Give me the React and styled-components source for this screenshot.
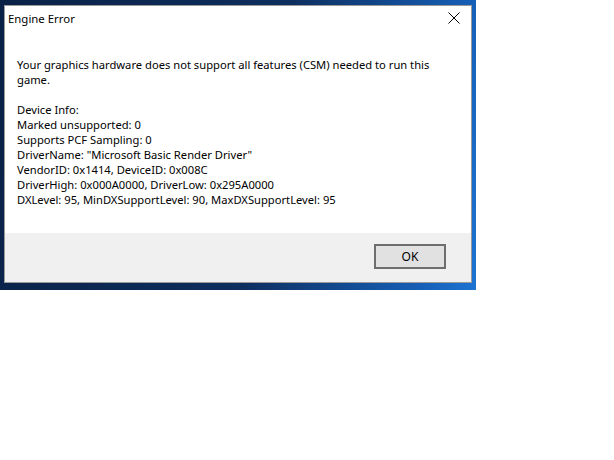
import React from "react";
import styled, { createGlobalStyle } from "styled-components";

const GlobalStyle = createGlobalStyle`
  html, body {
    margin: 0;
    padding: 0;
    background: #ffffff;
  }
  body {
    font-family: "Noto Sans", "Open Sans", sans-serif;
    font-size: 11.2px;
    color: #000000;
  }
`;

const Desktop = styled.div`
  width: 476px;
  height: 290px;
  box-sizing: border-box;
  padding: 5px 0 0 4px;
  background: linear-gradient(100deg, #0a2146 0%, #0d2e5e 55%, #1660b8 90%, #1d74d2 100%);
`;

const Window = styled.div`
  width: 468px;
  height: 278px;
  box-sizing: border-box;
  border: 1px solid #9a9a9a;
  background: #ffffff;
  display: flex;
  flex-direction: column;
`;

const TitleBar = styled.div`
  height: 30px;
  display: flex;
  align-items: center;
  justify-content: space-between;
  padding-left: 3px;
`;

const Title = styled.span`
  font-size: 11.4px;
  line-height: 15px;
  margin-top: -5px;
`;

const CloseButton = styled.div`
  width: 46px;
  height: 30px;
  display: flex;
  align-items: center;
  justify-content: center;
  margin-top: -6px;
  margin-right: -6px;
`;

const Body = styled.div`
  flex: 1;
  padding: 21px 12px 0 12px;
  line-height: 15px;
`;

const Paragraph = styled.p`
  margin: 0 0 15px 0;
  width: 420px;
`;

const Line = styled.div`
  white-space: nowrap;
`;

const Footer = styled.div`
  height: 49px;
  background: #f0f0f0;
  display: flex;
  justify-content: flex-end;
  align-items: flex-start;
  padding: 11px 25px 0 0;
  box-sizing: border-box;
`;

const Button = styled.button`
  width: 72px;
  height: 25px;
  box-sizing: border-box;
  border: 2px solid #6e6e6e;
  background: #e1e1e1;
  font-family: "Noto Sans", "Open Sans", sans-serif;
  font-size: 12px;
  color: #000;
  padding: 0;
  outline: none;
`;

const info = [
  "Device Info:",
  "Marked unsupported: 0",
  "Supports PCF Sampling: 0",
  'DriverName: "Microsoft Basic Render Driver"',
  "VendorID: 0x1414, DeviceID: 0x008C",
  "DriverHigh: 0x000A0000, DriverLow: 0x295A0000",
  "DXLevel: 95, MinDXSupportLevel: 90, MaxDXSupportLevel: 95",
];

const App = () => {
  return (
    <>
      <GlobalStyle />
      <Desktop>
        <Window>
          <TitleBar>
            <Title>Engine Error</Title>
            <CloseButton>
              <svg width="12" height="12" viewBox="0 0 12 12">
                <path d="M0.5 0.5 L11.5 11.5 M11.5 0.5 L0.5 11.5" stroke="#000" strokeWidth="1" fill="none" />
              </svg>
            </CloseButton>
          </TitleBar>
          <Body>
            <Paragraph>
              Your graphics hardware does not support all features (CSM) needed to run this game.
            </Paragraph>
            {info.map((l) => (
              <Line key={l}>{l}</Line>
            ))}
          </Body>
          <Footer>
            <Button>OK</Button>
          </Footer>
        </Window>
      </Desktop>
    </>
  );
};

export default App;
